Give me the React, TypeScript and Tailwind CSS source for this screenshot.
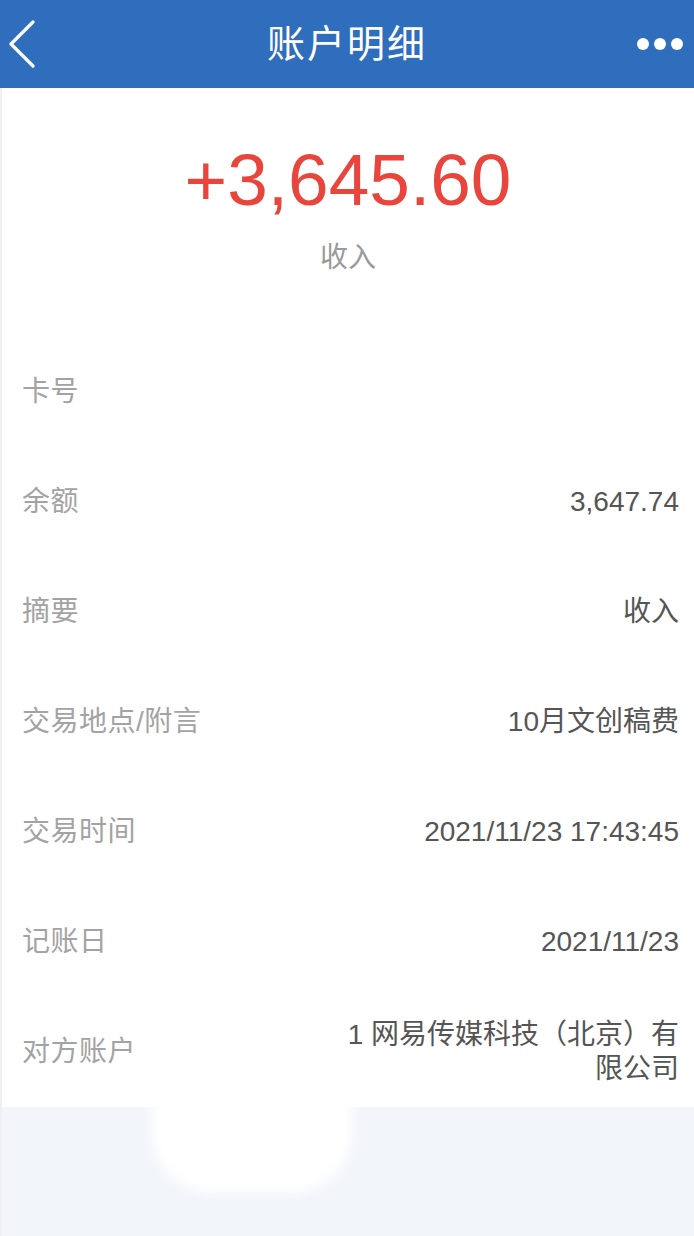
import React from "react";

const rows: { label: string; value: React.ReactNode }[] = [
  { label: "卡号", value: "" },
  { label: "余额", value: "3,647.74" },
  { label: "摘要", value: "收入" },
  { label: "交易地点/附言", value: "10月文创稿费" },
  { label: "交易时间", value: "2021/11/23 17:43:45" },
  { label: "记账日", value: "2021/11/23" },
  {
    label: "对方账户",
    value: (
      <>
        1 网易传媒科技（北京）有
        <br />
        限公司
      </>
    ),
  },
];

export default function App() {
  return (
    <div
      className="w-[694px] h-[1236px] overflow-hidden bg-white flex flex-col"
      style={{ fontFamily: '"Liberation Sans", "Noto Sans CJK SC", sans-serif' }}
    >
      <header className="h-[88px] shrink-0 bg-[#2f6dbd] flex items-center justify-between relative">
        <div className="w-[60px] h-full flex items-center pl-[7px]">
          <svg width="30" height="48" viewBox="0 0 30 48" fill="none">
            <path d="M26 2 L4 24 L26 46" stroke="white" strokeWidth="3.2" strokeLinecap="round" strokeLinejoin="round" />
          </svg>
        </div>
        <h1 className="absolute left-0 right-0 text-center text-white text-[38px] leading-none font-normal tracking-[2px] pointer-events-none">
          账户明细
        </h1>
        <div className="flex items-center gap-[5px] pr-[11px]">
          <span className="w-[12px] h-[12px] rounded-full bg-white" />
          <span className="w-[12px] h-[12px] rounded-full bg-white" />
          <span className="w-[12px] h-[12px] rounded-full bg-white" />
        </div>
      </header>

      <main className="flex-1 flex flex-col border-l-2 border-[#f0f0f0]">
        <section className="h-[249px] shrink-0 flex flex-col items-center pt-[55px]">
          <div className="text-[73px] leading-none text-[#e8453c]">+3,645.60</div>
          <div className="mt-[28px] text-[28px] leading-none text-[#9a9a9a]">收入</div>
        </section>

        <section className="flex flex-col">
          {rows.map((r) => (
            <div key={r.label} className="h-[110px] flex items-center justify-between pl-[20px] pr-[15px]">
              <span className="text-[28px] leading-none text-[#a3a3a3] tracking-[0.5px]">{r.label}</span>
              <span className="text-[28px] leading-[34px] text-[#555555] text-right">{r.value}</span>
            </div>
          ))}
        </section>

        <section className="flex-1 bg-[#f2f5fa] relative">
          <div className="absolute left-[150px] -top-[20px] w-[200px] h-[105px] bg-white rounded-b-[60px] blur-[6px]" />
        </section>
      </main>
    </div>
  );
}
